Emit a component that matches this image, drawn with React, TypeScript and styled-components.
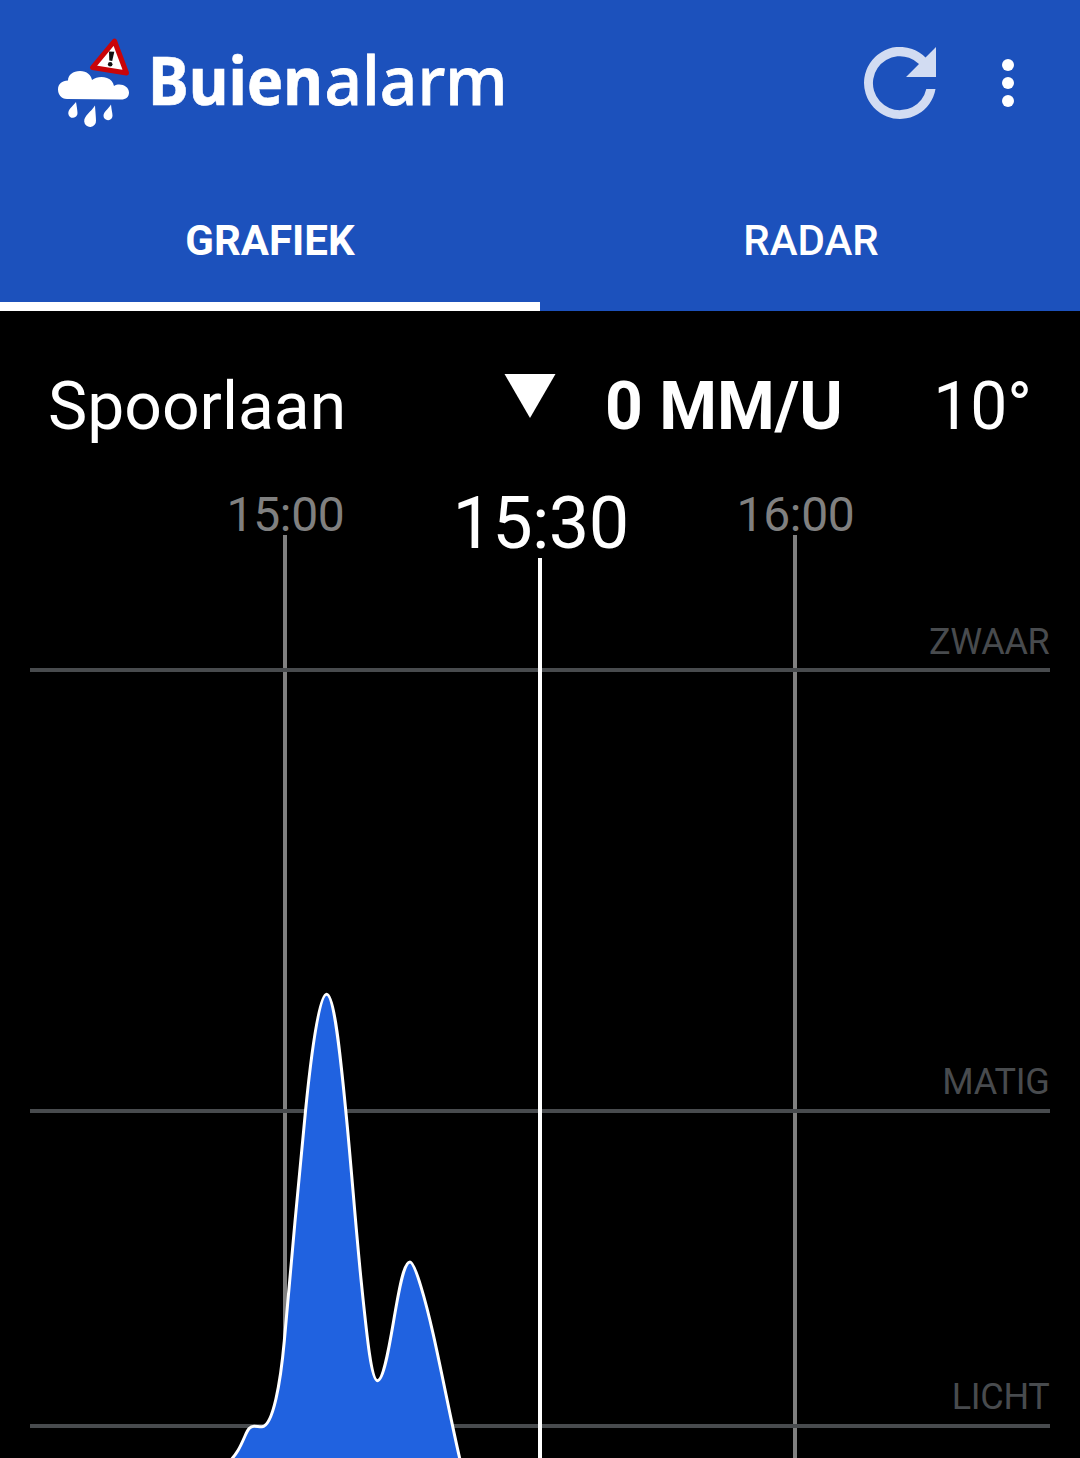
import React from "react";
import styled, { createGlobalStyle } from "styled-components";

const GlobalStyle = createGlobalStyle`
  body {
    margin: 0;
    background: #000;
    overflow: hidden;
  }
`;

const Screen = styled.div`
  display: flex;
  flex-direction: column;
  width: 1080px;
  height: 1458px;
  overflow: hidden;
  background: #000;
  color: #fff;
  font-family: Roboto, "Liberation Sans", sans-serif;
`;

const Header = styled.header`
  background: #1c51bc;
`;

const Toolbar = styled.div`
  display: flex;
  align-items: center;
  justify-content: space-between;
  height: 166px;
  box-sizing: border-box;
  padding: 0 54px 0 48px;
`;

const Actions = styled.div`
  display: flex;
  align-items: center;
  gap: 54px;
`;

const IconButton = styled.button<{ $width: number }>`
  display: flex;
  justify-content: center;
  width: ${(p) => p.$width}px;
  padding: 0;
  border: 0;
  background: none;
`;

const Tabs = styled.nav`
  display: grid;
  grid-template-columns: 1fr 1fr;
  height: 145px;
`;

const Tab = styled.button<{ $active?: boolean }>`
  border: 0;
  border-bottom: 9px solid ${(p) => (p.$active ? "#fff" : "transparent")};
  padding: 12px 0 0 ${(p) => (p.$active ? 0 : 2)}px;
  background: none;
  color: #fff;
  font-family: inherit;
  font-size: 42px;
  font-weight: ${(p) => (p.$active ? 700 : 500)};
`;

const Summary = styled.section`
  display: flex;
  align-items: center;
  height: 169px;
  padding: 22px 48px 0;
  font-size: 66px;
  line-height: 78px;
  box-sizing: border-box;
  white-space: pre;
`;

const Place = styled.span`
  width: 456px;
`;

const Picker = styled.span`
  display: flex;
  width: 52px;
  margin: 0 49px 22px 0;
`;

const Rain = styled.strong`
  flex: 1;
  font-weight: 700;
`;

const Temperature = styled.span``;

const Chart = styled.svg`
  display: block;
  flex: none;
`;

const rainOutline = [
  "M228 1463",
  "C238 1453 241 1445 245 1436",
  "C248 1429 250 1426.200 254 1426.200",
  "C257 1426.200 259 1426.800 262 1426.700",
  "C273 1426 280.500 1383 284.300 1341",
  "C290.500 1272 298.500 1180 305.600 1110",
  "C311.800 1048 319.500 994.300 326.600 994.300",
  "C334.200 994.300 340.200 1053 346 1113",
  "C351.500 1168 356 1232 361.700 1286",
  "C367.300 1340 371.500 1380.700 377.500 1380.700",
  "C384 1380.700 390 1342 395 1313",
  "C399.500 1287 404 1262 410 1262",
  "C415 1262 426 1302 433.300 1334.700",
  "C443 1378 454 1436 462 1468",
].join("");

const levels = [
  { label: "ZWAAR", y: 670, baseline: 654 },
  { label: "MATIG", y: 1111, baseline: 1094 },
  { label: "LICHT", y: 1426, baseline: 1409 },
];

const hours = [
  { label: "15:00", x: 285 },
  { label: "16:00", x: 795 },
];

function Logo() {
  return (
    <svg width="470" height="120" viewBox="48 23 470 120" role="img" aria-label="Buienalarm">
      <g fill="#fff">
        <path d="M67 99C61 99 58 94 58 89.500C58 84 62 80.500 68 80.500C68 75 73 71 80 71C87 71 91 75 92 80C96 77 102 76 107 78C111 79.500 113 82 114 86C120 82.500 129 86 129 92.500C129 97 126 99.500 121 99.500Z" />
        <path d="M76 102C77 108 77.500 111 77.500 113A4.600 4.600 0 0 1 68.300 113.500C68.300 109 72 107 76 102Z" />
        <path d="M95 105.500C95.500 113 96 117 96 120.500A5.900 5.900 0 0 1 84.200 121.500C84 115.500 91 112 95 105.500Z" />
        <path d="M111 104.500C111.500 110 112.500 113 112.500 115.500A4.500 4.500 0 0 1 103.500 116C103.500 111.500 108 109.500 111 104.500Z" />
      </g>
      <path d="M114.500 41L92.500 67.500L126.500 73Z" fill="#fff" stroke="#c90509" strokeWidth="5" strokeLinejoin="round" />
      <path d="M109 51.500L114.300 51.800L112.200 61L109.300 60.600Z" fill="#111" />
      <circle cx="110.200" cy="64.300" r="2.300" fill="#111" />
      <g fill="#fff" stroke="#fff" fontFamily='"Noto Sans", "Open Sans", sans-serif' fontSize="66.500">
        <text x="148" y="105" fontWeight="700" strokeWidth="0.600" textLength="175" lengthAdjust="spacingAndGlyphs">
          Buien
        </text>
        <text x="324.500" y="105" fontWeight="500" strokeWidth="0.800" textLength="183" lengthAdjust="spacingAndGlyphs">
          alarm
        </text>
      </g>
    </svg>
  );
}

export default function App() {
  return (
    <Screen>
      <GlobalStyle />
      <Header>
        <Toolbar>
          <Logo />
          <Actions>
            <IconButton $width={72} aria-label="Vernieuwen">
              <svg width="72" height="72" viewBox="864 47 72 72">
                <path
                  fill="#d2dcf2"
                  d="M925.500 57.500A36 36 0 1 0 935.500 89H926.300A27 27 0 1 1 919 64L906 77H936V47Z"
                />
              </svg>
            </IconButton>
            <IconButton $width={36} aria-label="Menu">
              <svg width="12" height="48" viewBox="0 0 12 48" fill="#fff">
                <circle cx="6" cy="6" r="6" />
                <circle cx="6" cy="24" r="6" />
                <circle cx="6" cy="42" r="6" />
              </svg>
            </IconButton>
          </Actions>
        </Toolbar>
        <Tabs>
          <Tab $active>GRAFIEK</Tab>
          <Tab>RADAR</Tab>
        </Tabs>
      </Header>
      <Summary>
        <Place>Spoorlaan</Place>
        <Picker>
          <svg width="52" height="44" viewBox="0 0 52 44">
            <path d="M0.500 0H51.500L26 44Z" fill="#fff" />
          </svg>
        </Picker>
        <Rain>0 MM/U</Rain>
        <Temperature>10°</Temperature>
      </Summary>
      <Chart width="1080" height="978" viewBox="0 480 1080 978">
        {hours.map((h) => (
          <g key={h.label} fill="#808080">
            <text x={h.x + 0.5} y="531" fontSize="48" letterSpacing="-0.3" textAnchor="middle">
              {h.label}
            </text>
            <rect x={h.x - 2} y="535" width="4" height="923" />
          </g>
        ))}
        {levels.map((l) => (
          <g key={l.label} fill="#484b4e">
            <text x="1049.500" y={l.baseline} fontSize="36" letterSpacing="-0.3" textAnchor="end">
              {l.label}
            </text>
            <rect x="30" y={l.y - 2} width="1020" height="4" />
          </g>
        ))}
        <path d={rainOutline} fill="#2062e0" stroke="#fff" strokeWidth="3" />
        <text x="540.500" y="548" fontSize="72" letterSpacing="-0.7" textAnchor="middle" fill="#fff">
          15:30
        </text>
        <rect x="538" y="558" width="4" height="900" fill="#fff" />
      </Chart>
    </Screen>
  );
}
